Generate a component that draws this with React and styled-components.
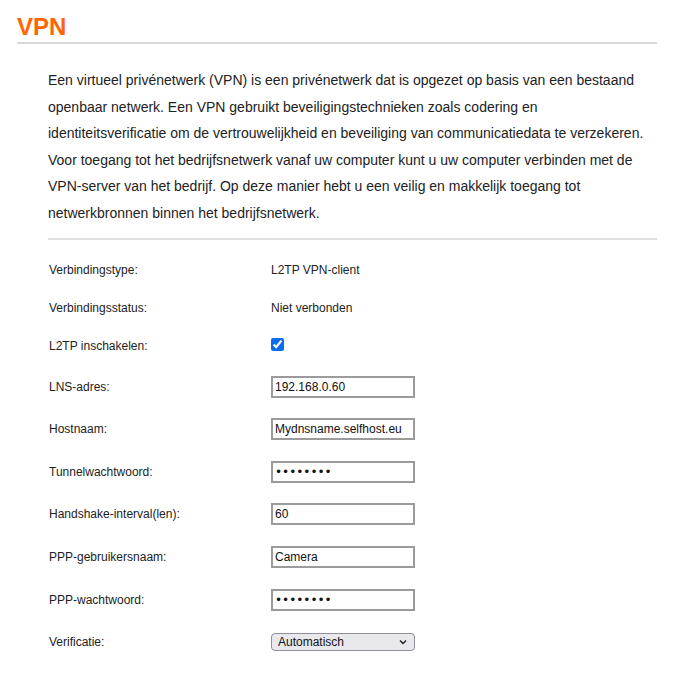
import React from 'react'
import styled, { createGlobalStyle } from 'styled-components'

const GlobalStyle = createGlobalStyle`
  body {
    margin: 0;
    background: #ffffff;
    font-family: "Liberation Sans", Arial, sans-serif;
    color: #222222;
  }
`;

const Page = styled.div`
  padding: 14px 16px 20px 17px;
`;

const Title = styled.h2`
  margin: 0;
  font-size: 24px;
  line-height: 25px;
  font-weight: bold;
  color: #ff6600;
  padding-bottom: 3px;
  border-bottom: 2px solid #d9d9d9;
`;

const Content = styled.div`
  padding-left: 31px;
`;

const Intro = styled.p`
  margin: 0;
  padding: 23px 0 11px;
  font-size: 14px;
  line-height: 26.6px;
  color: #222222;
  border-bottom: 2px solid #e0e0e0;
`;

const Form = styled.div`
  display: flex;
  flex-direction: column;
  padding-top: 11px;
`;

const Row = styled.div`
  display: grid;
  grid-template-columns: 223px 1fr;
  align-items: center;
  height: ${p => p.$h || 42.6}px;
  font-size: 12px;
`;

const Label = styled.span`
  padding-left: 1px;
  color: #222222;
`;

const Value = styled.span`
  color: #222222;
`;

const Check = styled.input`
  margin: 0;
  width: 13px;
  height: 13px;
  accent-color: #0b6cf0;
`;

const Field = styled.input`
  box-sizing: border-box;
  width: 144px;
  height: 22px;
  margin: 0;
  padding: 0 2px;
  border: 2px solid #9b9b9b;
  font-family: ${p => (p.type === 'password' ? '"DejaVu Sans", sans-serif' : '"Liberation Sans", Arial, sans-serif')};
  font-size: 12px;
  color: #111111;
  background: #ffffff;
  outline: none;
`;

const SelectWrap = styled.div`
  position: relative;
  width: 144px;
  height: 18px;
`;

const Select = styled.select`
  appearance: none;
  box-sizing: border-box;
  width: 144px;
  height: 18px;
  margin: 0;
  padding: 0 0 0 6px;
  border: 1px solid #8f8f9d;
  border-radius: 4px;
  background: #e9e9ed;
  font-family: "Liberation Sans", Arial, sans-serif;
  font-size: 12px;
  color: #111111;
`;

const Chevron = styled.svg`
  position: absolute;
  right: 8px;
  top: 6px;
  pointer-events: none;
`;

export default function App() {
  return (
    <>
      <GlobalStyle />
      <Page>
        <Title>VPN</Title>
        <Content>
          <Intro>
            Een virtueel privénetwerk (VPN) is een privénetwerk dat is opgezet op basis van een bestaand
            openbaar netwerk. Een VPN gebruikt beveiligingstechnieken zoals codering en
            identiteitsverificatie om de vertrouwelijkheid en beveiliging van communicatiedata te verzekeren.
            Voor toegang tot het bedrijfsnetwerk vanaf uw computer kunt u uw computer verbinden met de
            VPN-server van het bedrijf. Op deze manier hebt u een veilig en makkelijk toegang tot
            netwerkbronnen binnen het bedrijfsnetwerk.
          </Intro>
          <Form>
            <Row $h={38}>
              <Label>Verbindingstype:</Label>
              <Value>L2TP VPN-client</Value>
            </Row>
            <Row $h={38}>
              <Label>Verbindingsstatus:</Label>
              <Value>Niet verbonden</Value>
            </Row>
            <Row $h={38.7}>
              <Label>L2TP inschakelen:</Label>
              <div><Check type="checkbox" defaultChecked /></div>
            </Row>
            <Row>
              <Label>LNS-adres:</Label>
              <div><Field type="text" defaultValue="192.168.0.60" /></div>
            </Row>
            <Row>
              <Label>Hostnaam:</Label>
              <div><Field type="text" defaultValue="Mydnsname.selfhost.eu" /></div>
            </Row>
            <Row>
              <Label>Tunnelwachtwoord:</Label>
              <div><Field type="password" defaultValue="12345678" /></div>
            </Row>
            <Row>
              <Label>Handshake-interval(len):</Label>
              <div><Field type="text" defaultValue="60" /></div>
            </Row>
            <Row>
              <Label>PPP-gebruikersnaam:</Label>
              <div><Field type="text" defaultValue="Camera" /></div>
            </Row>
            <Row>
              <Label>PPP-wachtwoord:</Label>
              <div><Field type="password" defaultValue="12345678" /></div>
            </Row>
            <Row>
              <Label>Verificatie:</Label>
              <SelectWrap>
                <Select defaultValue="auto">
                  <option value="auto">Automatisch</option>
                  <option value="pap">PAP</option>
                  <option value="chap">CHAP</option>
                </Select>
                <Chevron width="8" height="6" viewBox="0 0 8 6">
                  <path d="M1 1.5 L4 4.5 L7 1.5" fill="none" stroke="#222" strokeWidth="1.4" />
                </Chevron>
              </SelectWrap>
            </Row>
          </Form>
        </Content>
      </Page>
    </>
  )
}
